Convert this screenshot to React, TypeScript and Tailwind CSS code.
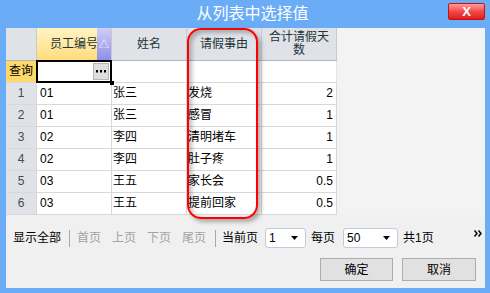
import React from "react";

const rows = [
  { n: 1, id: "01", name: "张三", reason: "发烧", days: "2" },
  { n: 2, id: "01", name: "张三", reason: "感冒", days: "1" },
  { n: 3, id: "02", name: "李四", reason: "清明堵车", days: "1" },
  { n: 4, id: "02", name: "李四", reason: "肚子疼", days: "1" },
  { n: 5, id: "03", name: "王五", reason: "家长会", days: "0.5" },
  { n: 6, id: "03", name: "王五", reason: "提前回家", days: "0.5" },
];

function Dropdown({ value, width }: { value: string; width: string }) {
  return (
    <div className={`${width} h-[20px] flex items-center justify-between bg-white border border-[#c3cadb] rounded-[3px] pl-[3px] pr-[7px]`}>
      <span className="text-[12px] text-black leading-none">{value}</span>
      <svg width="7" height="4" viewBox="0 0 7 4">
        <polygon points="0,0 7,0 3.5,4" fill="#000" />
      </svg>
    </div>
  );
}

export default function App() {
  return (
    <div
      className="w-[490px] h-[293px] bg-[#6aacf6] flex flex-col text-[12px] text-black"
      style={{ fontFamily: '"Liberation Sans", "Noto Sans CJK SC", sans-serif' }}
    >
      {/* title bar */}
      <div className="h-[28px] flex shrink-0">
        <div className="flex-1 pl-[57px] text-center text-white text-[16px] leading-[27px]">从列表中选择值</div>
        <div className="mt-[3px] mr-[5px] w-[37px] h-[17px] rounded-[2px] border border-[#c81010] bg-gradient-to-b from-[#ff9a9a] via-[#f24848] to-[#e01818] flex items-center justify-center text-white font-bold text-[13px] leading-none">
          X
        </div>
      </div>

      {/* body */}
      <div className="flex-1 ml-[6px] mr-[5px] mb-[5px] bg-[#f0f0f0] flex flex-col relative">
        <div className="h-[187px] flex bg-[#f3f3f3] shrink-0">
          <div className="w-[331px] bg-white flex flex-col">
            {/* header */}
            <div className="h-[33px] flex bg-[#dfe3e8] border-b border-[#b2b7bd] text-[#233438]">
              <div className="w-[31px] border-r border-[#c6cbd1]" />
              <div className="w-[75px] border-r border-[#c6cbd1] relative bg-gradient-to-b from-[#fff4c4] to-[#ffdc7c] flex items-center justify-center">
                <span>员工编号</span>
                <div className="absolute right-0 top-0 bottom-0 w-[14px] bg-gradient-to-b from-[#cfcff8] to-[#8e8ee8] flex items-center justify-center text-white text-[10px]">
                  △
                </div>
              </div>
              <div className="w-[75px] border-r border-[#c6cbd1] flex items-center justify-center">姓名</div>
              <div className="w-[75px] border-r border-[#c6cbd1] flex items-center justify-center">请假事由</div>
              <div className="w-[75px] border-r border-[#c6cbd1] flex items-center justify-center text-center leading-[13px] px-[4px]">
                合计请假天数
              </div>
            </div>

            {/* filter row */}
            <div className="h-[22px] flex border-b border-[#d8d8d8]">
              <div className="w-[31px] bg-[#fdd96a] border-r border-[#d8d8d8] pl-[3px] leading-[21px]">查询</div>
              <div className="w-[75px] relative">
                <div className="absolute -left-px -top-px w-[76px] h-[23px] border-2 border-black" />
                <div className="absolute right-[3px] top-[2px] w-[16px] h-[17px] bg-[#dedede] border border-[#b5b5b5] flex items-center justify-center">
                  <svg width="10" height="3" viewBox="0 0 10 3">
                    <rect x="0" y="0" width="2" height="2.5" fill="#000" />
                    <rect x="4" y="0" width="2" height="2.5" fill="#000" />
                    <rect x="8" y="0" width="2" height="2.5" fill="#000" />
                  </svg>
                </div>
                <div className="absolute -right-[2px] -bottom-[3px] w-[4px] h-[4px] bg-black" />
              </div>
              <div className="w-[75px] border-r border-[#e4e4e4]" />
              <div className="w-[75px] border-r border-[#e4e4e4]" />
              <div className="w-[75px] border-r border-[#e4e4e4]" />
            </div>

            {rows.map((r) => (
              <div key={r.n} className="h-[22px] flex border-b border-[#d8d8d8] leading-[21px]">
                <div className="w-[31px] bg-[#dfe3e8] border-r border-[#d8d8d8] text-center text-[#4a4a4a]">{r.n}</div>
                <div className="w-[75px] border-r border-[#d8d8d8] pl-[3px]">{r.id}</div>
                <div className="w-[75px] border-r border-[#d8d8d8] pl-[1px]">{r.name}</div>
                <div className="w-[75px] border-r border-[#d8d8d8] pl-[1px]">{r.reason}</div>
                <div className="w-[75px] border-r border-[#d8d8d8] pr-[3px] text-right">{r.days}</div>
              </div>
            ))}
          </div>
        </div>

        {/* pager */}
        <div className="mt-[13px] h-[20px] flex items-center pl-[7px] whitespace-nowrap">
          <span>显示全部</span>
          <span className="ml-[8px] w-px h-[17px] bg-[#a8a8a8]" />
          <span className="ml-[7px] text-[#a3a3a3]">首页</span>
          <span className="ml-[11px] text-[#a3a3a3]">上页</span>
          <span className="ml-[11px] text-[#a3a3a3]">下页</span>
          <span className="ml-[11px] text-[#a3a3a3]">尾页</span>
          <span className="ml-[9px] w-px h-[17px] bg-[#a8a8a8]" />
          <span className="ml-[6px]">当前页</span>
          <div className="ml-[7px]">
            <Dropdown value="1" width="w-[41px]" />
          </div>
          <span className="ml-[5px]">每页</span>
          <div className="ml-[8px]">
            <Dropdown value="50" width="w-[55px]" />
          </div>
          <span className="ml-[5px]">共1页</span>
          <svg className="ml-auto mr-[3px] self-start mt-[2px]" width="8" height="7" viewBox="0 0 8 7">
            <path d="M0.5 0.5 L3 3.5 L0.5 6.5 M4.5 0.5 L7 3.5 L4.5 6.5" stroke="#000" strokeWidth="1.5" fill="none" />
          </svg>
        </div>

        {/* buttons */}
        <div className="mt-[10px] flex justify-end gap-[9px] mr-[9px]">
          <div className="w-[73px] h-[23px] bg-[#e1e1e1] border border-[#adadad] flex items-center justify-center">确定</div>
          <div className="w-[74px] h-[23px] bg-[#e1e1e1] border border-[#adadad] flex items-center justify-center">取消</div>
        </div>

        {/* red annotation around 请假事由 */}
        <div className="absolute left-[181px] top-0 w-[71px] h-[191px] rounded-[14px] border-2 border-[#ff0000] shadow-[3px_3px_4px_rgba(0,0,0,0.3),inset_3px_3px_4px_rgba(0,0,0,0.25)] pointer-events-none" />
      </div>
    </div>
  );
}
